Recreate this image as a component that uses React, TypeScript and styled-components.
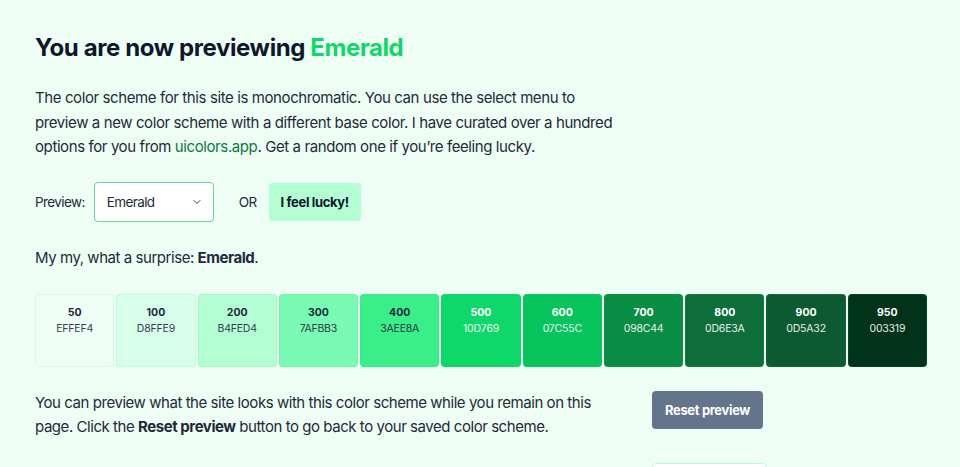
import React from 'react';
import styled, { createGlobalStyle } from 'styled-components';

const swatches = [
  { shade: '50', hex: 'EFFEF4', dark: false },
  { shade: '100', hex: 'D8FFE9', dark: false },
  { shade: '200', hex: 'B4FED4', dark: false },
  { shade: '300', hex: '7AFBB3', dark: false },
  { shade: '400', hex: '3AEE8A', dark: false },
  { shade: '500', hex: '10D769', dark: true },
  { shade: '600', hex: '07C55C', dark: true },
  { shade: '700', hex: '098C44', dark: true },
  { shade: '800', hex: '0D6E3A', dark: true },
  { shade: '900', hex: '0D5A32', dark: true },
  { shade: '950', hex: '003319', dark: true },
];

const GlobalStyle = createGlobalStyle`
  body {
    margin: 0;
    background: #effef4;
    font-family: Inter, "Noto Sans", sans-serif;
    color: #1e293b;
  }
`;

const Chevron = () => (
  <svg width="12" height="12" viewBox="0 0 24 24" fill="none" stroke="#334155" strokeWidth="2" strokeLinecap="round" strokeLinejoin="round">
    <path d="m6 9 6 6 6-6" />
  </svg>
);

const App = () => {
  return (
    <S.Page>
      <GlobalStyle />
      <S.Title>
        You are now previewing <S.Accent>Emerald</S.Accent>
      </S.Title>
      <S.Intro>
        The color scheme for this site is monochromatic. You can use the select menu to preview a new color
        scheme with a different base color. I have curated over a hundred options for you from{' '}
        <S.Link href="#">uicolors.app</S.Link>. Get a random one if you’re feeling lucky.
      </S.Intro>
      <S.Controls>
        <S.Label>Preview:</S.Label>
        <S.Select>
          <span>Emerald</span>
          <Chevron />
        </S.Select>
        <S.Or>OR</S.Or>
        <S.LuckyButton>I feel lucky!</S.LuckyButton>
      </S.Controls>
      <S.Text>
        My my, what a surprise: <strong>Emerald</strong>.
      </S.Text>
      <S.Palette>
        {swatches.map((s) => (
          <S.Swatch key={s.shade} $bg={`#${s.hex}`} $dark={s.dark}>
            <S.Shade>{s.shade}</S.Shade>
            <S.Hex>{s.hex}</S.Hex>
          </S.Swatch>
        ))}
      </S.Palette>
      <S.ActionRow>
        <S.Text>
          You can preview what the site looks with this color scheme while you remain on this page. Click the{' '}
          <strong>Reset preview</strong> button to go back to your saved color scheme.
        </S.Text>
        <S.ResetButton>Reset preview</S.ResetButton>
      </S.ActionRow>
      <S.ActionRow>
        <S.Text>
          Like what you see? Save this color scheme so it stays the same the next time you come back.
        </S.Text>
        <S.SaveButton>Save scheme</S.SaveButton>
      </S.ActionRow>
    </S.Page>
  );
};

const S = {
  Page: styled.div`
    padding: 32px 33px 40px 35px;
    display: flex;
    flex-direction: column;
    gap: 24px;
  `,
  Title: styled.h1`
    margin: 0 0 -2px 0;
    font-size: 24px;
    line-height: 32px;
    font-weight: 700;
    letter-spacing: -0.4px;
    color: #0f172a;
  `,
  Accent: styled.span`
    color: #10d769;
  `,
  Intro: styled.p`
    margin: 0 0 -2px 0;
    max-width: 585px;
    font-size: 15px;
    line-height: 24.5px;
    letter-spacing: -0.4px;
  `,
  Link: styled.a`
    color: #0b7a3f;
    text-decoration: none;
  `,
  Controls: styled.div`
    display: flex;
    align-items: center;
    font-size: 13.5px;
    letter-spacing: -0.6px;
  `,
  Label: styled.span`
    margin-right: 9px;
  `,
  Select: styled.div`
    box-sizing: border-box;
    width: 120px;
    height: 40px;
    display: flex;
    align-items: center;
    justify-content: space-between;
    padding: 0 10px 0 12px;
    background: #ffffff;
    border: 1px solid #62d496;
    border-radius: 4px;
    color: #1e293b;
  `,
  Or: styled.span`
    margin: 0 12px 0 25px;
  `,
  LuckyButton: styled.button`
    height: 38px;
    padding: 0 12px;
    border: none;
    border-radius: 4px;
    background: #b4fed4;
    color: #0f172a;
    font-family: inherit;
    font-size: 13px;
    font-weight: 700;
    letter-spacing: -0.35px;
  `,
  Text: styled.p`
    margin: 0;
    font-size: 15px;
    line-height: 24px;
    letter-spacing: -0.45px;
  `,
  Palette: styled.div`
    display: grid;
    grid-template-columns: repeat(11, 1fr);
    gap: 2px;
  `,
  Swatch: styled.div<{ $bg: string; $dark: boolean }>`
    box-sizing: border-box;
    height: 73px;
    padding-top: 10px;
    display: flex;
    flex-direction: column;
    align-items: center;
    border-radius: 4px;
    border: 1px solid rgba(16, 215, 105, 0.12);
    background: ${({ $bg }) => $bg};
    color: ${({ $dark }) => ($dark ? '#ffffff' : '#1e293b')};
  `,
  Shade: styled.span`
    font-size: 10.5px;
    line-height: 16px;
    font-weight: 700;
  `,
  Hex: styled.span`
    font-size: 10.5px;
    line-height: 16px;
    letter-spacing: -0.2px;
    opacity: 0.9;
  `,
  ActionRow: styled.div`
    display: grid;
    grid-template-columns: 593px auto;
    column-gap: 24px;
    align-items: start;
    justify-items: start;
  `,
  ResetButton: styled.button`
    height: 38px;
    padding: 0 13px;
    border: none;
    border-radius: 4px;
    background: #64748b;
    color: #ffffff;
    font-family: inherit;
    font-size: 13px;
    font-weight: 700;
    letter-spacing: -0.35px;
  `,
  SaveButton: styled.button`
    height: 38px;
    padding: 0 14px;
    border: 1px solid #b4fed4;
    border-radius: 4px;
    background: #ffffff;
    color: #0f172a;
    font-family: inherit;
    font-size: 13px;
    font-weight: 700;
  `,
};

export default App;
